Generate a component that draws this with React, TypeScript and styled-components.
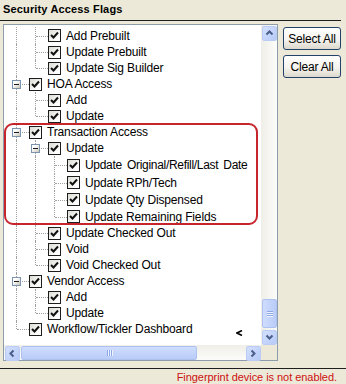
import React from "react";
import styled, { createGlobalStyle } from "styled-components";

const Global = createGlobalStyle`
  html, body { margin: 0; padding: 0; background: #ECE9D8; }
  body { font-family: "Liberation Sans", Arial, sans-serif; }
`;

const Page = styled.div`
  width: 346px;
  height: 384px;
  background: #ECE9D8;
  display: flex;
  flex-direction: column;
  overflow: hidden;
  font-family: "Liberation Sans", Arial, sans-serif;
  color: #000;
`;

const Header = styled.div`
  width: 341px;
  height: 21px;
  box-sizing: border-box;
  padding: 2px 0 0 3px;
  border-bottom: 1px solid #1e1e1e;
  font-weight: bold;
  font-size: 11px;
  letter-spacing: 0.15px;
  line-height: 14px;
`;

const Main = styled.div`
  display: flex;
  gap: 5px;
  padding-left: 3px;
  margin-top: 3px;
`;

const TreeBox = styled.div`
  width: 275px;
  height: 337px;
  box-sizing: border-box;
  border: 1px solid #8D9CAA;
  background: #fff;
  display: grid;
  grid-template-columns: 1fr 16px;
  grid-template-rows: 1fr 15px;
`;

const Content = styled.div`
  position: relative;
  overflow: hidden;
  padding: 2px 0 0 3px;
`;

const Row = styled.div<{ $h: number }>`
  display: flex;
  align-items: center;
  height: ${(p) => p.$h}px;
  white-space: nowrap;
`;

type Line = "none" | "full" | "tee" | "elbow";

const Cell = styled.div<{ $v: Line }>`
  position: relative;
  width: 19px;
  height: 100%;
  flex: none;
  &::before {
    content: "";
    display: ${(p) => (p.$v === "none" ? "none" : "block")};
    position: absolute;
    left: 9px;
    top: 0;
    height: ${(p) => (p.$v === "elbow" ? "50%" : "100%")};
    border-left: 1px dotted #A0A0A0;
  }
  &::after {
    content: "";
    display: ${(p) => (p.$v === "tee" || p.$v === "elbow" ? "block" : "none")};
    position: absolute;
    left: 10px;
    right: -3px;
    top: 50%;
    border-top: 1px dotted #A0A0A0;
  }
`;

const Expander = styled.span`
  position: absolute;
  left: 5px;
  top: calc(50% - 4px);
  width: 9px;
  height: 9px;
  box-sizing: border-box;
  border: 1px solid #7C94AE;
  background: linear-gradient(135deg, #ffffff 30%, #C9C6B8);
  z-index: 1;
  &::after {
    content: "";
    position: absolute;
    left: 1px;
    top: 3px;
    width: 5px;
    height: 1px;
    background: #1b1b1b;
  }
`;

const Box = styled.span`
  width: 13px;
  height: 13px;
  box-sizing: border-box;
  margin-left: 3px;
  border: 1px solid #1d1d1d;
  background: linear-gradient(135deg, #DCDBD4, #FFFFFF 80%);
  display: flex;
  align-items: center;
  justify-content: center;
  flex: none;
  position: relative;
  z-index: 1;
`;

const Label = styled.span<{ $wide?: boolean }>`
  margin-left: 5px;
  font-size: 12px;
  letter-spacing: ${(p) => (p.$wide ? "-0.3px" : "-0.15px")};
  word-spacing: ${(p) => (p.$wide ? "2px" : "0")};
  line-height: 14px;
`;

const Highlight = styled.div`
  position: absolute;
  left: 0;
  top: 98px;
  width: 254px;
  height: 102px;
  box-sizing: border-box;
  border: 2px solid #C7252C;
  border-radius: 9px;
  pointer-events: none;
`;

const Cursor = styled.svg`
  position: absolute;
  left: 232px;
  top: 305px;
`;

const VScroll = styled.div`
  display: flex;
  flex-direction: column;
  background: linear-gradient(to right, #EFEEE8, #FCFCFA);
`;

const HScroll = styled.div`
  display: flex;
  background: linear-gradient(to bottom, #EFEEE8, #FCFCFA);
`;

const Corner = styled.div`
  background: #ECE9D8;
`;

const ArrowBtn = styled.div`
  width: 15px;
  height: 15px;
  margin: 1px 0 0 1px;
  box-sizing: border-box;
  border: 1px solid #BBCCF4;
  border-radius: 2px;
  background: linear-gradient(135deg, #D3DFFD, #B7CAF7);
  display: flex;
  align-items: center;
  justify-content: center;
  flex: none;
`;

const VTrack = styled.div`
  flex: 1;
  display: flex;
  flex-direction: column;
  justify-content: flex-end;
  padding: 0 0 1px 1px;
`;

const HTrack = styled.div`
  flex: 1;
  display: flex;
  padding: 1px 0 0 1px;
`;

const Thumb = styled.div<{ $vertical?: boolean }>`
  box-sizing: border-box;
  border: 1px solid #AEC2F2;
  border-radius: 2px;
  background: ${(p) =>
    p.$vertical
      ? "linear-gradient(to right, #CFDCFD, #B9CCF8)"
      : "linear-gradient(to bottom, #CFDCFD, #B9CCF8)"};
  display: flex;
  flex-direction: ${(p) => (p.$vertical ? "column" : "row")};
  align-items: center;
  justify-content: center;
  gap: 1px;
`;

const Grip = styled.span<{ $vertical?: boolean }>`
  display: block;
  width: ${(p) => (p.$vertical ? "6px" : "1px")};
  height: ${(p) => (p.$vertical ? "1px" : "6px")};
  background: #8DA8E8;
  box-shadow: ${(p) => (p.$vertical ? "0 1px 0 #EEF3FE" : "1px 0 0 #EEF3FE")};
`;

const ButtonCol = styled.div`
  display: flex;
  flex-direction: column;
  gap: 5px;
  padding-top: 3px;
`;

const Button = styled.button`
  width: 58px;
  height: 23px;
  box-sizing: border-box;
  border: 1px solid #22416B;
  border-radius: 3px;
  background: linear-gradient(#FFFFFF, #F5F4EF 55%, #DCD8CD);
  font-family: "Liberation Sans", Arial, sans-serif;
  font-size: 12px;
  letter-spacing: -0.2px;
  color: #000;
  padding: 0;
`;

const Footer = styled.div`
  margin-top: 7px;
  border-top: 1px solid #1e1e1e;
  padding: 2px 9px 0 0;
  text-align: right;
  font-size: 11px;
  letter-spacing: -0.05px;
  line-height: 13px;
  color: #CC1010;
`;

type Item = {
  label: string;
  lines: Line[];
  expand?: boolean;
  h: number;
  wide?: boolean;
};

const items: Item[] = [
  { label: "Add Prebuilt", lines: ["full", "tee"], h: 17 },
  { label: "Update Prebuilt", lines: ["full", "tee"], h: 16 },
  { label: "Update Sig Builder", lines: ["full", "elbow"], h: 16 },
  { label: "HOA Access", lines: ["tee"], expand: true, h: 16 },
  { label: "Add", lines: ["full", "tee"], h: 16 },
  { label: "Update", lines: ["full", "elbow"], h: 16 },
  { label: "Transaction Access", lines: ["tee"], expand: true, h: 16 },
  { label: "Update", lines: ["full", "tee"], expand: true, h: 16 },
  { label: "Update Original/Refill/Last Date", lines: ["full", "full", "tee"], h: 18, wide: true },
  { label: "Update RPh/Tech", lines: ["full", "full", "tee"], h: 17 },
  { label: "Update Qty Dispensed", lines: ["full", "full", "tee"], h: 17 },
  { label: "Update Remaining Fields", lines: ["full", "full", "elbow"], h: 17 },
  { label: "Update Checked Out", lines: ["full", "tee"], h: 16 },
  { label: "Void", lines: ["full", "tee"], h: 16 },
  { label: "Void Checked Out", lines: ["full", "elbow"], h: 16 },
  { label: "Vendor Access", lines: ["tee"], expand: true, h: 16 },
  { label: "Add", lines: ["full", "tee"], h: 16 },
  { label: "Update", lines: ["full", "elbow"], h: 16 },
  { label: "Workflow/Tickler Dashboard", lines: ["elbow"], h: 16 },
];

const Check = () => (
  <svg width="9" height="9" viewBox="0 0 9 9">
    <path d="M1 4 L3.5 6.5 L8 1.5" fill="none" stroke="#111" strokeWidth="2" />
  </svg>
);

const Chevron = ({ dir }: { dir: "up" | "down" | "left" | "right" }) => {
  const d = {
    up: "M1.5 5.5 L4.5 2.5 L7.5 5.5",
    down: "M1.5 2.5 L4.5 5.5 L7.5 2.5",
    left: "M5.5 1.5 L2.5 4.5 L5.5 7.5",
    right: "M2.5 1.5 L5.5 4.5 L2.5 7.5",
  }[dir];
  return (
    <svg width="9" height="9" viewBox="0 0 9 9">
      <path d={d} fill="none" stroke="#4A5E8A" strokeWidth="2" />
    </svg>
  );
};

export default function App() {
  return (
    <Page>
      <Global />
      <Header>Security Access Flags</Header>
      <Main>
        <TreeBox>
          <Content>
            {items.map((it, i) => (
              <Row key={i} $h={it.h}>
                {it.lines.map((l, j) => (
                  <Cell key={j} $v={l}>
                    {it.expand && j === it.lines.length - 1 && <Expander />}
                  </Cell>
                ))}
                <Box>
                  <Check />
                </Box>
                <Label $wide={it.wide}>{it.label}</Label>
              </Row>
            ))}
            <Highlight />
            <Cursor width="7" height="6" viewBox="0 0 7 6">
              <path d="M6 0.5 L1 3 L6 5.5" fill="none" stroke="#000" strokeWidth="1.6" />
            </Cursor>
          </Content>
          <VScroll>
            <ArrowBtn>
              <Chevron dir="up" />
            </ArrowBtn>
            <VTrack>
              <Thumb $vertical style={{ height: 29 }}>
                <Grip $vertical />
                <Grip $vertical />
                <Grip $vertical />
              </Thumb>
            </VTrack>
            <ArrowBtn>
              <Chevron dir="down" />
            </ArrowBtn>
          </VScroll>
          <HScroll>
            <ArrowBtn>
              <Chevron dir="left" />
            </ArrowBtn>
            <HTrack>
              <Thumb style={{ width: 176 }}>
                <Grip />
                <Grip />
                <Grip />
              </Thumb>
            </HTrack>
            <ArrowBtn>
              <Chevron dir="right" />
            </ArrowBtn>
          </HScroll>
          <Corner />
        </TreeBox>
        <ButtonCol>
          <Button>Select All</Button>
          <Button>Clear All</Button>
        </ButtonCol>
      </Main>
      <Footer>Fingerprint device is not enabled.</Footer>
    </Page>
  );
}
